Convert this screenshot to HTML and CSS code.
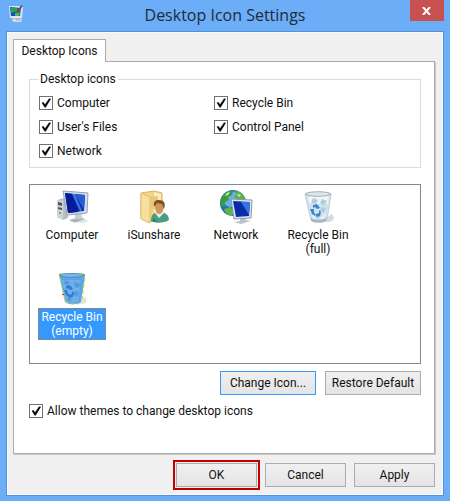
FILE: index.html
```html
<!DOCTYPE html>
<html lang="en">
<head>
  <meta charset="UTF-8">
  <meta name="viewport" content="width=device-width, initial-scale=1.0">
  <title>Desktop Icon Settings</title>
  <link rel="stylesheet" href="styles.css">
</head>
<body>
  <header class="titlebar">
    <svg class="app-icon" width="18" height="20" viewBox="0 0 18 20">
      <ellipse cx="9" cy="16" rx="5" ry="2" fill="#d9dde0"/>
      <path d="M7 13l5-1 1 4-5 1z" fill="#b4bcc4"/>
      <path d="M1 2l14 0-1 12-12 0z" fill="#dfe5ea"/>
      <path d="M2 3l11 1-1 8-9 0z" fill="#1d45d8"/>
      <path d="M3 4l6 0 1 3-7 2z" fill="#1fae3c"/>
      <path d="M7 9l5-1-1 4-4 0z" fill="#39c447"/>
      <path d="M8 9l5-8 2 1-5 7z" fill="#555d68"/>
      <path d="M9 6l3 2-3 1z" fill="#d22"/>
    </svg>
    <h1>Desktop Icon Settings</h1>
    <button class="close" aria-label="Close">
      <svg width="10" height="8" viewBox="0 0 10 8"><path d="M1 0l7 8M8 0L1 8" stroke="#fff" stroke-width="2"/></svg>
    </button>
  </header>

  <main class="client">
    <div class="tabs">
      <button class="tab">Desktop Icons</button>
    </div>

    <section class="panel">
      <fieldset>
        <legend>Desktop icons</legend>
        <label><input type="checkbox" checked>Computer</label>
        <label><input type="checkbox" checked>Recycle Bin</label>
        <label><input type="checkbox" checked>User's Files</label>
        <label><input type="checkbox" checked>Control Panel</label>
        <label><input type="checkbox" checked>Network</label>
      </fieldset>

      <ul class="icons">
        <li>
          <svg width="34" height="34" viewBox="0 0 34 34">
            <ellipse cx="24" cy="31" rx="9" ry="2" fill="#e3e6e8"/>
            <path d="M2 10l7-2 4 1v19l-5 2-6-3z" fill="#b9bec3"/>
            <path d="M2 10l6 1v19l-6-3z" fill="#d0d4d7"/>
            <path d="M3 12l4 1v3l-4-1zM3 17l4 1v2l-4-1z" fill="#4c5359"/>
            <circle cx="5" cy="23" r="1" fill="#35b34a"/>
            <path d="M20 24l6-1 1 4 3 2-10 3-6-2 6-2z" fill="#c6ced6"/>
            <path d="M14 30l16-1-10 3z" fill="#9da8b3"/>
            <path d="M8 1l25 2-1 20-20 2z" fill="#d3dfeb" stroke="#93a3b6"/>
            <path d="M10 3l20 2-1 16-16 2z" fill="#0d2fae"/>
            <path d="M10 3l8 1 5 18-10 1z" fill="#061c98"/>
            <path d="M20 4l10 1-1 15z" fill="#2a5cd6"/>
            <path d="M17 4l3 0 7 17-2 0z" fill="#3f78e6"/>
          </svg>
          <span>Computer</span>
        </li>
        <li>
          <svg width="34" height="34" viewBox="0 0 34 34">
            <path d="M4 3l13-2 8 2v27l-14 2-7-4z" fill="#f0d487" stroke="#d7b45e"/>
            <path d="M17 2l7 2v25l-7 1z" fill="#fbeebb"/>
            <path d="M4 3l9 4v26l-9-4z" fill="#f8dfa0" stroke="#e0bd68"/>
            <path d="M14 7l7-1v12l-7 2z" fill="#e9c979"/>
            <path d="M14 31c0-6 3-9 8-9s10 2 10 8c-4 3-13 4-18 1z" fill="#4a9d80"/>
            <path d="M18 23l4 5 5-5-2-3h-5z" fill="#e8eee4"/>
            <path d="M18 14c0-3 9-3 9 1 0 5-2 9-5 9s-4-5-4-10z" fill="#ce965d"/>
            <path d="M17 16c-1-5 2-6 5-6 5 0 7 3 5 9l-2-5-5-1-2 3z" fill="#79512e"/>
            <path d="M16 28l4 3-4 1z" fill="#2d7f65"/>
          </svg>
          <span>iSunshare</span>
        </li>
        <li>
          <svg width="34" height="34" viewBox="0 0 34 34">
            <circle cx="14" cy="13" r="13" fill="#2471b4"/>
            <circle cx="12" cy="9" r="8" fill="#64b2e2"/>
            <path d="M3 7c3-5 7-7 11-6l-1 4-4 2 1 3-4 2 0 5-4-1c-1-3-1-5 1-7z" fill="#3d9a3d"/>
            <path d="M16 1c5 0 8 3 10 7l-3 3-5-1-3-4 3-2zM5 19l6-2 4 4-2 5c-4-1-7-3-8-7z" fill="#5bb445"/>
            <path d="M8 3l3-1-2 3-3 1zM18 4l4 1-2 2z" fill="#d7efbd"/>
            <path d="M21 27h5l1 3 5 1-10 3-7-2 6-1z" fill="#bac4cc"/>
            <path d="M12 9l21 1-1 18-17 1z" fill="#dbe5ee" stroke="#8997a8"/>
            <path d="M14 11l17 1-1 14-13 1z" fill="#0b2ca9"/>
            <path d="M22 12l9 0-1 13z" fill="#3773e0"/>
          </svg>
          <span>Network</span>
        </li>
        <li>
          <svg width="34" height="34" viewBox="0 0 34 34">
            <path d="M22 32l8-8c4 2 4 6-1 8z" fill="#d8dadc"/>
            <path d="M4 4h26l-4 26c-3 3-13 3-16 0z" fill="#d3e1ec" stroke="#c0ced9"/>
            <path d="M7 8l5-4 5 2 6-2 5 3-1 7-6-2-5 3-8-2z" fill="#f0f5f9"/>
            <path d="M12 8l5 2-2 4-5-1zM21 9l5 2-3 4-4-2zM20 17l5 1-2 5-4-2z" fill="#b3cbdd"/>
            <path d="M11 24l6-1 4 3 4-3-2 7h-11z" fill="#e6eff5"/>
            <path d="M17 23l4 2-3 4-4-1z" fill="#bed2e1"/>
            <path d="M10 28c3 2 12 2 15 0l0 3c-3 2-12 2-15 0z" fill="#a9b8c3"/>
            <path d="M4 4c3-3 23-3 26 0-4 3-22 3-26 0z" fill="#dfe7ee" stroke="#a5adb4"/>
            <g fill="#3a86d6">
              <path d="M12 15l4-1 3 4-3 1-2-2-2 1z"/>
              <path d="M9 19l4 0 0 4 2 1-1 2-3-2z"/>
              <path d="M18 20l2 2-1 4-4 1 0-3 3-1z"/>
            </g>
          </svg>
          <span>Recycle Bin (full)</span>
        </li>
        <li class="selected">
          <svg width="34" height="34" viewBox="0 0 34 34">
            <path d="M22 32l7-7c4 1 4 6-2 7z" fill="#dfe1e4"/>
            <path d="M4 3h26l-4 27c-3 3-13 3-16 0z" fill="#5ea4e3"/>
            <path d="M7 8l19 0-3 21c-3 2-9 2-12 0z" fill="#70b0ea"/>
            <path d="M10 8l5 2-2 3-4-1zM20 10l6 2-3 4-4-2zM19 19l5 1-2 5-4-3zM13 25l4 1-2 4-3-1z" fill="#5499dd"/>
            <path d="M4 3c3-2 23-2 26 0-4 3-22 3-26 0z" fill="#7fb8e8" stroke="#4b90cd"/>
            <path d="M5 6l5 23 6 3h7M27 28l3-22M4 2l6-1M24 1l6 1" fill="none" stroke="#b4e63a" stroke-dasharray="4 2"/>
            <g fill="#2f7bd3">
              <path d="M11 14l4-1 3 4-3 1-2-2-2 1z"/>
              <path d="M9 18l3 0 1 4 2 1-1 2-3-2z"/>
              <path d="M17 19l2 2-1 4-4 1 0-3 3-1z"/>
            </g>
            <path d="M7 22h2v1h-2z" fill="#c33"/>
          </svg>
          <span>Recycle Bin (empty)</span>
        </li>
      </ul>

      <div class="icon-actions">
        <button class="focused">Change Icon...</button>
        <button>Restore Default</button>
      </div>

      <label class="themes"><input type="checkbox" checked>Allow themes to change desktop icons</label>
    </section>

    <footer class="dialog-actions">
      <button class="ok">OK</button>
      <button>Cancel</button>
      <button>Apply</button>
    </footer>
  </main>
</body>
</html>
```
FILE: styles.css
```css
* {
  box-sizing: border-box;
}

body {
  margin: 0;
  padding: 0 6px 5px;
  min-height: 100vh;
  display: flex;
  flex-direction: column;
  background-color: #6badf6;
  color: #111;
  font-family: Roboto, "Liberation Sans", sans-serif;
  font-size: 12px;
  line-height: 14px;
}

button {
  height: 24px;
  padding: 0;
  border: 1px solid #acacac;
  background: linear-gradient(#f0f0f0, #e4e4e4);
  color: #111;
  font: inherit;
}

/* Title bar */
.titlebar {
  display: grid;
  grid-template-columns: 34px 1fr 34px;
  height: 31px;
}

.app-icon {
  margin: 4px 0 0 2px;
}

h1 {
  margin: 0;
  font-family: "Open Sans", "Noto Sans", sans-serif;
  font-size: 16px;
  font-weight: normal;
  line-height: 30px;
  text-align: center;
  color: #222b38;
}

.close {
  height: 21px;
  border: none;
  background: #c75050;
}

/* Window body */
.client {
  flex: 1;
  display: flex;
  flex-direction: column;
  padding: 7px 8px 8px 6px;
  border: 1px solid #5592dc;
  box-shadow: inset 0 0 0 1px #fafafa;
  background-color: #f0f0f0;
}

.tabs {
  display: flex;
}

.tab {
  position: relative;
  width: 93px;
  height: 23px;
  margin-bottom: -1px;
  border-bottom: none;
  background: #fff;
}

.panel {
  flex: 1;
  padding: 10px 13px 16px 15px;
  border: 1px solid #acacac;
  box-shadow: 1px 1px 0 #c8c8c8;
  background-color: #fff;
}

fieldset {
  display: grid;
  grid-template-columns: 175px 1fr;
  row-gap: 10px;
  margin: 0;
  padding: 10px 9px 9px;
  border: 1px solid #dcdcdc;
}

legend {
  padding: 0 2px 0 1px;
}

label {
  display: flex;
  align-items: center;
  gap: 4px;
}

input {
  appearance: none;
  width: 14px;
  height: 14px;
  margin: 0;
  border: 1px solid #707070;
  background: #fff;
}

input:checked::before {
  content: "";
  display: block;
  height: 12px;
  background: #111;
  clip-path: polygon(14% 48%, 28% 42%, 42% 60%, 75% 12%, 92% 14%, 48% 88%, 38% 88%);
}

/* Icon list */
.icons {
  display: grid;
  grid-template-columns: repeat(auto-fill, 82px);
  grid-auto-rows: 82px;
  min-height: 180px;
  margin: 16px 0 7px;
  padding: 5px 0 0 1px;
  border: 1px solid #828790;
  list-style: none;
}

.icons li {
  display: flex;
  flex-direction: column;
  align-items: center;
  gap: 2px;
  text-align: center;
}

.icons span {
  max-width: 68px;
  padding: 1px 2px;
  border: 1px solid transparent;
}

.icons .selected span {
  border: 1px dotted #c8762b;
  background-color: #3399ff;
  background-clip: border-box;
  color: #fff;
}

.icon-actions {
  display: flex;
  justify-content: flex-end;
  gap: 9px;
  margin-bottom: 9px;
}

.icon-actions button {
  width: 96px;
}

.icon-actions .focused {
  border-color: #3399ff;
}

/* Dialog buttons */
.dialog-actions {
  display: flex;
  justify-content: flex-end;
  gap: 8px;
  padding-top: 9px;
}

.dialog-actions button {
  width: 81px;
}

.dialog-actions .ok {
  outline: 2px solid #c00000;
  outline-offset: 1px;
}
```
